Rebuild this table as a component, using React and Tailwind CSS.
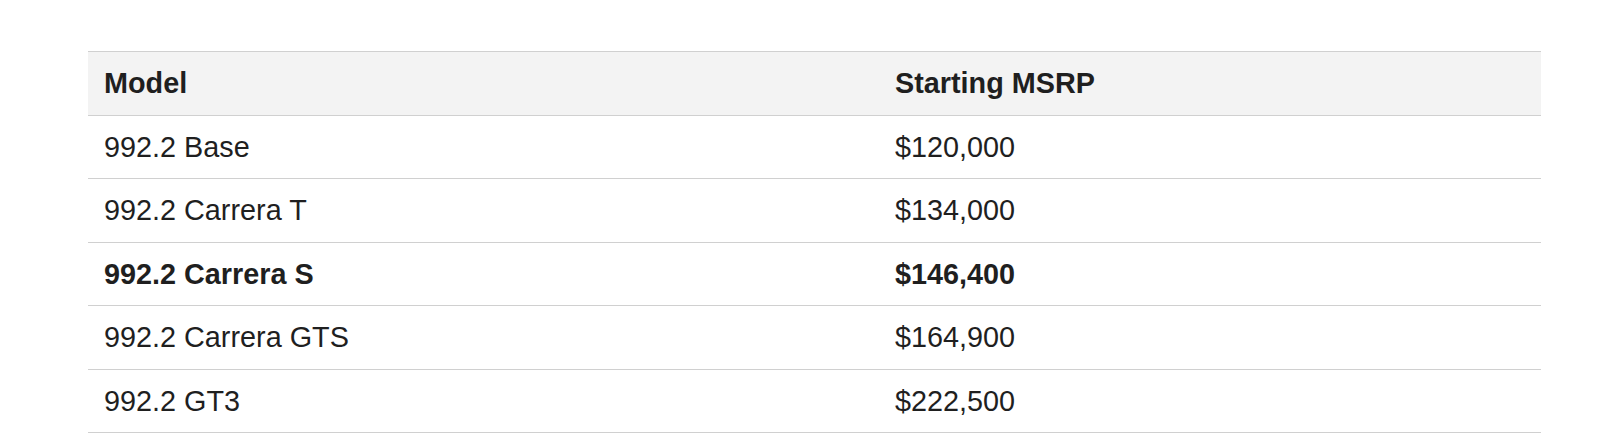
const rows = [
  { model: '992.2 Base', price: '$120,000' },
  { model: '992.2 Carrera T', price: '$134,000' },
  { model: '992.2 Carrera S', price: '$146,400', bold: true },
  { model: '992.2 Carrera GTS', price: '$164,900' },
  { model: '992.2 GT3', price: '$222,500' },
];

export default function App() {
  return (
    <div className="w-[1600px] h-[445px] bg-white pt-[51px] pl-[88px] font-['Liberation_Sans',Arial,sans-serif] text-[#1f1f1f]">
      <table className="w-[1453px] table-fixed border-collapse text-[28.8px] leading-none">
        <colgroup>
          <col className="w-[791px]" />
          <col />
        </colgroup>
        <thead>
          <tr className="h-[64px] bg-[#f3f3f3] border-y border-[#d0d0d0]">
            <th className="px-4 text-left font-bold">Model</th>
            <th className="px-4 text-left font-bold">Starting MSRP</th>
          </tr>
        </thead>
        <tbody>
          {rows.map((row, i) => (
            <tr
              key={row.model}
              className={`border-b border-[#d0d0d0] ${i % 2 === 0 ? 'h-[63px]' : 'h-[64px]'} ${row.bold ? 'font-bold' : ''}`}
            >
              <td className="px-4">{row.model}</td>
              <td className="px-4">{row.price}</td>
            </tr>
          ))}
        </tbody>
      </table>
    </div>
  );
}
